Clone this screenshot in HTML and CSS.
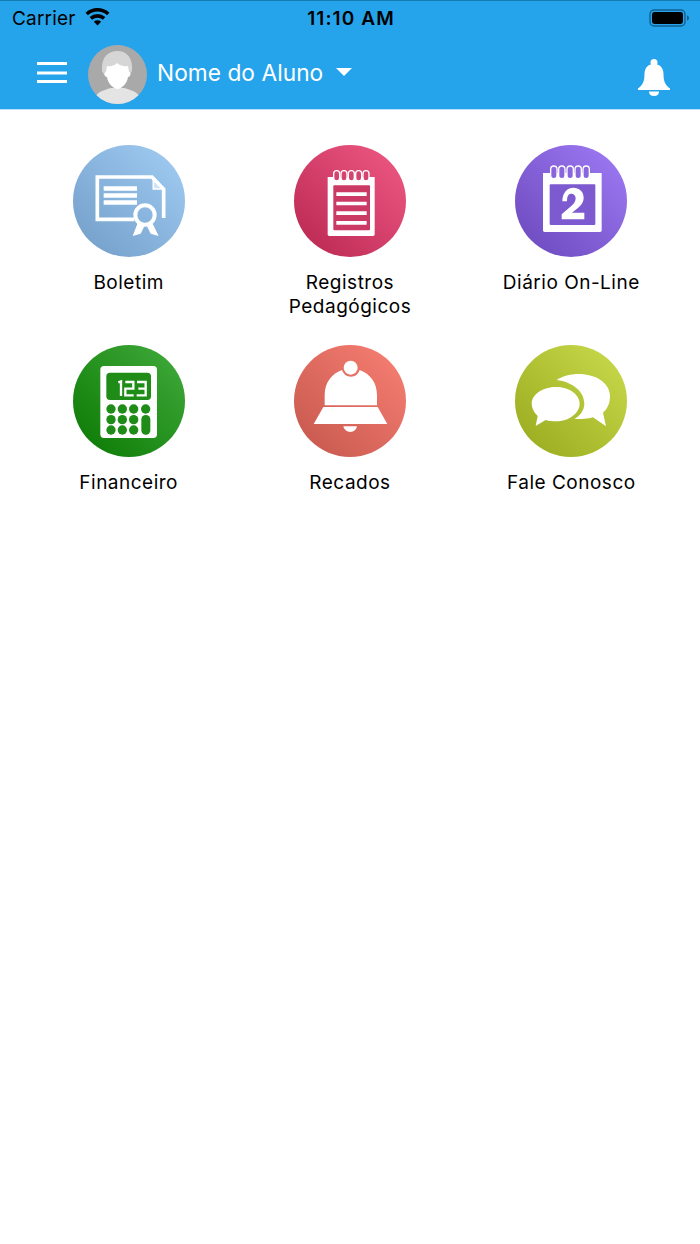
FILE: index.html
```html
<!DOCTYPE html>
<html lang="pt">
<head>
<meta charset="utf-8">
<title>Nome do Aluno</title>
<link rel="stylesheet" href="styles.css">
</head>
<body>
<header class="topbar">
  <div class="status">
    <div class="status-left">
      <span class="carrier">Carrier</span>
      <svg class="wifi" viewBox="0 0 26 19"><path d="M13 18.500 9.200 14.400a5.600 5.600 0 0 1 7.600 0Z"/><path d="M7.300 12.400 4.700 9.600a12.400 12.400 0 0 1 16.600 0l-2.600 2.800a8.600 8.600 0 0 0-11.400 0Z"/><path d="M2.900 7.700.4 5a18.600 18.600 0 0 1 25.200 0l-2.500 2.700a14.900 14.900 0 0 0-20.200 0Z"/></svg>
    </div>
    <span class="clock">11:10 AM</span>
    <svg class="battery" viewBox="0 0 41 18"><rect x="1" y="1" width="35" height="16" rx="4" fill="none" stroke="#14608f" stroke-width="1.400"/><rect x="3" y="3" width="31" height="12" rx="2.400" fill="#000"/><path d="M38 6.500c1.400.3 2 1.300 2 2.500s-.6 2.200-2 2.500Z" fill="#14608f"/></svg>
  </div>
  <nav class="navbar">
    <svg class="menu" viewBox="0 0 30 21"><path d="M0 1.500h30M0 11h30M0 19.500h30" stroke="#fff" stroke-width="3"/></svg>
    <svg class="avatar" viewBox="0 0 59 59">
      <circle cx="29.500" cy="29.500" r="29.500" fill="#a9a9a9"/>
      <path d="M14 26c-1-14 6-20 15.500-20S45 13 44 26l-3 5H17Z" fill="#d6d6d6"/>
      <path d="M8.500 50.200c3-4 9-5.700 14.500-7.200h13c5.500 1.500 11.500 3.200 14.500 7.200a29.500 29.500 0 0 1-42 0Z" fill="#e4e4e4"/>
      <path d="M19 21c4 1 8-1 10-3 2 2 7 4 11 3l1 6c2 0 2 5-1 5-1 7-6 11-10 12h-1c-4-1-9-5-10-12-3 0-3-5-1-5Z" fill="#fff"/>
    </svg>
    <span class="student">Nome do Aluno</span>
    <span class="caret"></span>
    <svg class="bell" viewBox="0 0 32 37"><circle cx="16" cy="3.500" r="3.500" fill="#fff"/><path d="M16 5c6 0 9.500 4 9.500 10 0 8 2 11 6.500 14.500V31H0v-1.500C4.500 26 6.500 23 6.500 15 6.500 9 10 5 16 5Z" fill="#fff"/><path d="M11 32.500h10c0 3-2 4.500-5 4.500s-5-1.500-5-4.500Z" fill="#fff"/></svg>
  </nav>
</header>

<main class="menu-grid">
  <a class="tile">
    <svg class="tile-icon" viewBox="38 28 336 336">
      <defs><linearGradient id="g-blue" x1="0" y1="1" x2="1" y2="0"><stop offset=".1" stop-color="#75a1cb"/><stop offset=".85" stop-color="#9bc6ee"/></linearGradient></defs>
      <circle cx="206" cy="196" r="168" fill="url(#g-blue)"/>
      <path d="M222 251H111V124h164l35 37v86" fill="none" stroke="#fff" stroke-width="11"/>
      <path d="M279 132v28h27Z" fill="#cfe3f6" stroke="#fff" stroke-width="5"/>
      <path d="M130 152h100v13H130zM130 173h100v13H130zM130 194h100v13H130z" fill="#fff"/>
      <circle cx="254" cy="238" r="29" fill="none" stroke="#fff" stroke-width="12"/>
      <path d="M232 262 217 301l24-7 11-22ZM276 262l19 39-24-7-11-22Z" fill="#fff"/>
    </svg>
    <span class="tile-label">Boletim</span>
  </a>
  <a class="tile">
    <svg class="tile-icon" viewBox="42 28 336 336">
      <defs><linearGradient id="g-pink" x1="0" y1="1" x2="1" y2="0"><stop offset=".1" stop-color="#bd2b55"/><stop offset=".85" stop-color="#e8537e"/></linearGradient></defs>
      <circle cx="210" cy="196" r="168" fill="url(#g-pink)"/>
      <path d="M143 124h141v172a5 5 0 0 1-5 5H148a5 5 0 0 1-5-5Z" fill="#fff"/>
      <rect x="160" y="149" width="110" height="135" rx="3" fill="#cb3a64"/>
      <path d="M169 170h91v11h-91zM169 198h91v11h-91zM169 227h91v11h-91zM169 256h91v11h-91z" fill="#fff"/>
      <g fill="#d54370" stroke="#fff" stroke-width="4"><rect x="161" y="105" width="18" height="31" rx="9"/><rect x="183" y="105" width="18" height="31" rx="9"/><rect x="205" y="105" width="18" height="31" rx="9"/><rect x="227" y="105" width="18" height="31" rx="9"/><rect x="249" y="105" width="18" height="31" rx="9"/></g>
    </svg>
    <span class="tile-label">Registros<br>Pedagógicos</span>
  </a>
  <a class="tile">
    <svg class="tile-icon" viewBox="46 28 336 336">
      <defs><linearGradient id="g-violet" x1="0" y1="1" x2="1" y2="0"><stop offset=".1" stop-color="#6f4cc0"/><stop offset=".85" stop-color="#9874ee"/></linearGradient></defs>
      <circle cx="214" cy="196" r="168" fill="url(#g-violet)"/>
      <path d="M130 112h176v172a5 5 0 0 1-5 5H135a5 5 0 0 1-5-5Z" fill="#fff"/>
      <rect x="150" y="146" width="137" height="122" rx="3" fill="#7d5ad0"/>
      <g fill="#8a66de" stroke="#fff" stroke-width="4"><rect x="153" y="91" width="19" height="38" rx="9.500"/><rect x="177" y="91" width="19" height="38" rx="9.500"/><rect x="202" y="91" width="19" height="38" rx="9.500"/><rect x="226" y="91" width="19" height="38" rx="9.500"/><rect x="250" y="91" width="19" height="38" rx="9.500"/></g>
      <path d="M188 197c0-28 17-41 33-41 17 0 31 11 31 30 0 15-10 25-21 34l-14 11h37v20h-68v-15l28-24c8-7 14-14 14-24 0-9-6-14-13-14-9 0-13 8-13 23Z" fill="#fff"/>
    </svg>
    <span class="tile-label">Diário On-Line</span>
  </a>
  <a class="tile">
    <svg class="tile-icon" viewBox="40 30 336 336">
      <defs><linearGradient id="g-green" x1="0" y1="1" x2="1" y2="0"><stop offset=".1" stop-color="#0f7d07"/><stop offset=".85" stop-color="#3aa434"/></linearGradient></defs>
      <circle cx="208" cy="198" r="168" fill="url(#g-green)"/>
      <rect x="122" y="93" width="170" height="216" rx="11" fill="#fff"/>
      <rect x="140" y="113" width="134" height="82" rx="11" fill="#1f8c17"/>
      <g fill="none" stroke="#fff" stroke-width="7"><path d="M176 142l8-3v44"/><path d="M197 141h24v20h-24v20h25"/><path d="M232 141h26v40h-27M236 161h22"/></g>
      <g fill="#1f8c17"><circle cx="154" cy="222" r="14"/><circle cx="188" cy="222" r="14"/><circle cx="222" cy="222" r="14"/><circle cx="258" cy="222" r="14"/><circle cx="154" cy="254" r="14"/><circle cx="188" cy="254" r="14"/><circle cx="222" cy="254" r="14"/><circle cx="154" cy="285" r="14"/><circle cx="188" cy="285" r="14"/><circle cx="222" cy="285" r="14"/><rect x="245" y="240" width="27" height="59" rx="13"/></g>
    </svg>
    <span class="tile-label">Financeiro</span>
  </a>
  <a class="tile">
    <svg class="tile-icon" viewBox="42 30 336 336">
      <defs><linearGradient id="g-coral" x1="0" y1="1" x2="1" y2="0"><stop offset=".1" stop-color="#c95a50"/><stop offset=".85" stop-color="#f27a6e"/></linearGradient></defs>
      <circle cx="210" cy="198" r="168" fill="url(#g-coral)"/>
      <path d="M186 105c-32 12-52 38-52 76v30h157v-30c0-38-20-64-52-76-4 13-14 20-26 20s-23-7-27-20Z" fill="#fff"/>
      <circle cx="212" cy="98" r="21" fill="#fff"/>
      <path d="M130 216h163l29 51H101Z" fill="#fff"/>
      <path d="M190 274h41c-2 10-10 17-20 17s-19-7-21-17Z" fill="#fff"/>
    </svg>
    <span class="tile-label">Recados</span>
  </a>
  <a class="tile">
    <svg class="tile-icon" viewBox="47 30 336 336">
      <defs><linearGradient id="g-olive" x1="0" y1="1" x2="1" y2="0"><stop offset=".1" stop-color="#9cad21"/><stop offset=".85" stop-color="#c3d546"/></linearGradient></defs>
      <circle cx="215" cy="198" r="168" fill="url(#g-olive)"/>
      <path d="M172 135c18-12 42-18 66-18 52 0 94 28 94 66 0 22-7 38-21 50l9 41-39-27c-11 3-24 5-36 5h-20c17-9 30-27 30-46 0-37-36-65-83-71Z" fill="#fff"/>
      <path d="M170 156c39 0 71 22 71 50s-32 53-71 53c-11 0-21-1-31-4l-30 18 6-30c-11-10-18-24-18-37 0-28 34-50 73-50Z" fill="#fff"/>
    </svg>
    <span class="tile-label">Fale Conosco</span>
  </a>
</main>
</body>
</html>
```
FILE: styles.css
```css
* {
  box-sizing: border-box;
}

html,
body {
  margin: 0;
  height: 100%;
}

body {
  background: #fff;
  color: #000;
  font-family: Inter, "Liberation Sans", sans-serif;
}

.topbar {
  height: 110px;
  background: #25a4ec;
  border-top: 1px solid #1679b3;
  border-bottom: 1px solid #b9e0f7;
  display: flex;
  flex-direction: column;
}

.status {
  height: 34px;
  padding: 0 10px 0 12px;
  display: grid;
  grid-template-columns: 1fr auto 1fr;
  align-items: center;
}

.status-left {
  display: flex;
  align-items: center;
  gap: 9px;
}

.carrier {
  font-size: 19px;
  letter-spacing: .2px;
}

.wifi {
  width: 25px;
  height: 18px;
  margin-top: -2px;
}

.clock {
  font-size: 19px;
  font-weight: 600;
  letter-spacing: 1.1px;
}

.battery {
  width: 41px;
  height: 18px;
  justify-self: end;
}

.navbar {
  flex: 1;
  display: flex;
  align-items: center;
  padding: 0 30px 0 37px;
}

.menu {
  width: 30px;
  height: 21px;
  margin-right: 21px;
}

.avatar {
  width: 59px;
  height: 59px;
  margin: 4px 10px 0 0;
}

.student {
  color: #fff;
  font-size: 22.7px;
  letter-spacing: .05px;
  margin-right: 13px;
}

.caret {
  width: 0;
  height: 0;
  border-left: 8.500px solid transparent;
  border-right: 8.500px solid transparent;
  border-top: 8px solid #fff;
}

.bell {
  width: 32px;
  height: 37px;
  margin-left: auto;
  margin-top: 10px;
}

.menu-grid {
  display: grid;
  grid-template-columns: repeat(3, 1fr);
  grid-auto-rows: 200.500px;
  padding: 34.500px 18px 0;
}

.tile {
  display: flex;
  flex-direction: column;
  align-items: center;
}

.tile-icon {
  width: 112px;
  height: 112px;
  flex: none;
}

.tile-label {
  margin-top: 14px;
  font-size: 19px;
  line-height: 24px;
  letter-spacing: .5px;
  text-align: center;
}
```
